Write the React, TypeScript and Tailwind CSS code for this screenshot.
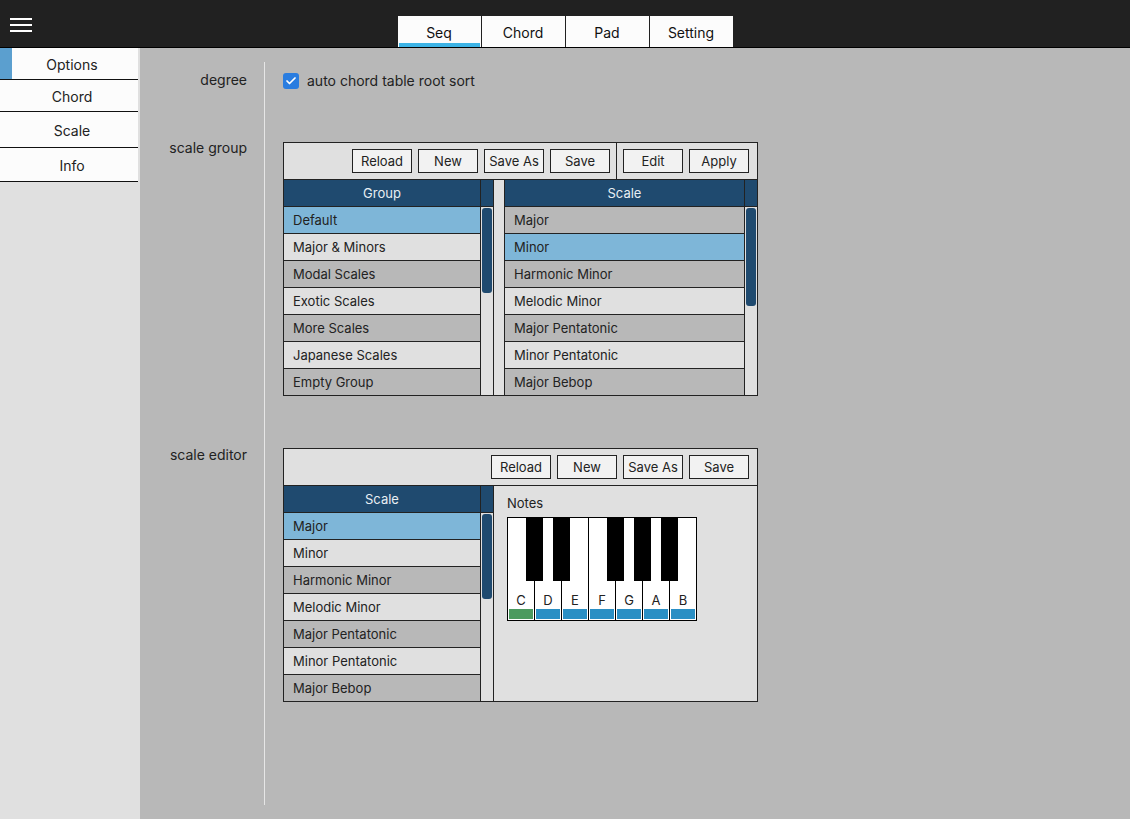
import { Check } from "lucide-react";

const groups = [
  "Default",
  "Major & Minors",
  "Modal Scales",
  "Exotic Scales",
  "More Scales",
  "Japanese Scales",
  "Empty Group",
];

const scales = [
  "Major",
  "Minor",
  "Harmonic Minor",
  "Melodic Minor",
  "Major Pentatonic",
  "Minor Pentatonic",
  "Major Bebop",
];

const tabs = ["Seq", "Chord", "Pad", "Setting"];

const sideItems = [
  { name: "Options", h: "h-[32px]" },
  { name: "Chord", h: "h-[32px]" },
  { name: "Scale", h: "h-[36px]" },
  { name: "Info", h: "h-[34px]" },
];

const keys = [
  { note: "C", bar: "bg-[#4b9a5f]" },
  { note: "D", bar: "bg-[#2a8fc4]" },
  { note: "E", bar: "bg-[#2a8fc4]" },
  { note: "F", bar: "bg-[#2a8fc4]" },
  { note: "G", bar: "bg-[#2a8fc4]" },
  { note: "A", bar: "bg-[#2a8fc4]" },
  { note: "B", bar: "bg-[#2a8fc4]" },
];

// left offsets (inside the border) of the black keys
const blackKeys = [18, 45, 99, 126, 153];

const Btn = ({ label }: { label: string }) => (
  <button className="h-[24px] w-[60px] self-center border border-[#222] bg-[#f2f2f2] pt-[1px] text-[13px] leading-none text-[#222]">
    {label}
  </button>
);

const ListColumn = ({
  title,
  items,
  selected,
  className,
}: {
  title: string;
  items: string[];
  selected: number;
  className: string;
}) => (
  <div className={`flex flex-col border-r border-[#222] ${className}`}>
    <div className="flex h-[27px] items-center justify-center border-b border-[#222] bg-[#1f4a6f] pt-[1px] text-[13px] text-[#e8eef3]">
      {title}
    </div>
    {items.map((item, i) => (
      <div
        key={item}
        className={`flex items-center pl-[9px] pt-[1px] text-[13px] text-[#222] ${
          i < items.length - 1 ? "h-[27px] border-b border-[#222]" : "h-[26px]"
        } ${
          i === selected
            ? "bg-[#7eb6d8]"
            : i % 2 === 0
              ? "bg-[#b8b8b8]"
              : "bg-[#e0e0e0]"
        }`}>
        {item}
      </div>
    ))}
  </div>
);

const ScrollColumn = ({ thumb, edge }: { thumb: string; edge: boolean }) => (
  <div className={`flex flex-col ${edge ? "w-[12px]" : "w-[13px] border-r border-[#222]"}`}>
    <div className="h-[27px] border-b border-[#222] bg-[#1f4a6f]" />
    <div className="flex-1 bg-[#e0e0e0] pl-[1px] pt-[1px]">
      <div className={`w-[10px] rounded-[3px] bg-[#1f4a6f] ${thumb}`} />
    </div>
  </div>
);

const Piano = () => (
  <div className="relative flex h-[104px] w-[190px] border border-black bg-white">
    {keys.map((k, i) => (
      <div
        key={k.note}
        className={`flex h-full flex-col justify-end pb-[1px] ${
          i < keys.length - 1 ? "w-[27px] border-r border-black" : "w-[26px]"
        }`}>
        <span className="text-center text-[13px] leading-[16px] text-[#222]">{k.note}</span>
        <div className={`mx-[1px] mt-[1px] h-[10px] ${k.bar}`} />
      </div>
    ))}
    {blackKeys.map(left => (
      <div
        key={left}
        className="absolute top-0 h-[63px] w-[17px] bg-black"
        style={{ left }}
      />
    ))}
  </div>
);

export default function App() {
  return (
    <div className="flex h-screen w-full flex-col font-['Inter',sans-serif]">
      {/* Top bar */}
      <div className="relative flex h-[48px] shrink-0 items-end justify-center border-b border-black bg-[#212121]">
        <div className="absolute left-[10px] top-[18px] flex flex-col gap-[4px]">
          <div className="h-[2px] w-[22px] bg-white" />
          <div className="h-[2px] w-[22px] bg-white" />
          <div className="h-[2px] w-[22px] bg-white" />
        </div>
        <div className="flex gap-[1px]">
          {tabs.map((t, i) => (
            <div
              key={t}
              className="relative flex h-[31px] w-[83px] items-center justify-center bg-[#fcfcfc] pt-[1px] text-[14px] text-[#111]">
              {t}
              {i === 0 && (
                <div className="absolute bottom-0 left-[1px] right-[1px] h-[4px] bg-[#3cb3e5]" />
              )}
            </div>
          ))}
        </div>
      </div>

      <div className="flex min-h-0 flex-1">
        {/* Sidebar */}
        <div className="w-[140px] shrink-0 bg-[#e0e0e0]">
          {sideItems.map((s, i) => (
            <div
              key={s.name}
              className={`relative flex w-[138px] items-center justify-center border-b border-[#111] bg-[#fcfcfc] pl-[6px] pt-[2px] text-[14px] text-[#222] ${s.h}`}>
              {i === 0 && (
                <div className="absolute bottom-0 left-0 top-0 w-[12px] bg-[#5b9fcf]" />
              )}
              {s.name}
            </div>
          ))}
        </div>

        {/* Main */}
        <div className="flex-1 bg-[#b8b8b8] py-[14px]">
          <div className="grid h-full grid-cols-[124px_1fr] grid-rows-[76px_306px_auto_1fr] text-[#222]">
            <div className="pr-[17px] pt-[8px] text-right text-[14px] leading-[20px]">degree</div>
            <div className="border-l border-[#e6e6e6] pl-[18px] pt-[11px]">
              <div className="flex items-center gap-[8px]">
                <div className="flex h-[16px] w-[16px] items-center justify-center rounded-[3px] bg-[#2a7de0]">
                  <Check size={12} strokeWidth={3.5} className="text-white" />
                </div>
                <span className="text-[14px] leading-[16px]">auto chord table root sort</span>
              </div>
            </div>

            <div className="pr-[17px] text-right text-[14px] leading-[20px]">scale group</div>
            <div className="border-l border-[#e6e6e6] pl-[18px] pt-[4px]">
              <div className="flex w-[475px] flex-col border border-[#222] bg-[#e0e0e0]">
                <div className="flex h-[37px] justify-end border-b border-[#222] pr-[8px]">
                  <div className="flex gap-[6px]">
                    <Btn label="Reload" />
                    <Btn label="New" />
                    <Btn label="Save As" />
                    <Btn label="Save" />
                  </div>
                  <div className="mx-[6px] w-[1px] bg-[#222]" />
                  <div className="flex gap-[6px]">
                    <Btn label="Edit" />
                    <Btn label="Apply" />
                  </div>
                </div>
                <div className="flex">
                  <ListColumn title="Group" items={groups} selected={0} className="w-[197px]" />
                  <ScrollColumn thumb="h-[85px]" edge={false} />
                  <div className="w-[11px] border-r border-[#222] bg-[#e0e0e0]" />
                  <ListColumn title="Scale" items={scales} selected={1} className="w-[240px]" />
                  <ScrollColumn thumb="h-[98px]" edge />
                </div>
              </div>
            </div>

            <div className="pr-[17px] pt-[1px] text-right text-[14px] leading-[20px]">scale editor</div>
            <div className="border-l border-[#e6e6e6] pl-[18px] pt-[4px]">
              <div className="flex w-[475px] flex-col border border-[#222] bg-[#e0e0e0]">
                <div className="flex h-[37px] justify-end gap-[6px] border-b border-[#222] pr-[8px]">
                  <Btn label="Reload" />
                  <Btn label="New" />
                  <Btn label="Save As" />
                  <Btn label="Save" />
                </div>
                <div className="flex">
                  <ListColumn title="Scale" items={scales} selected={0} className="w-[197px]" />
                  <ScrollColumn thumb="h-[85px]" edge={false} />
                  <div className="flex-1 bg-[#e0e0e0] pl-[13px] pt-[9px]">
                    <div className="mb-[6px] text-[13px] leading-[16px]">Notes</div>
                    <Piano />
                  </div>
                </div>
              </div>
            </div>

            <div />
            <div className="border-l border-[#e6e6e6]" />
          </div>
        </div>
      </div>
    </div>
  );
}
